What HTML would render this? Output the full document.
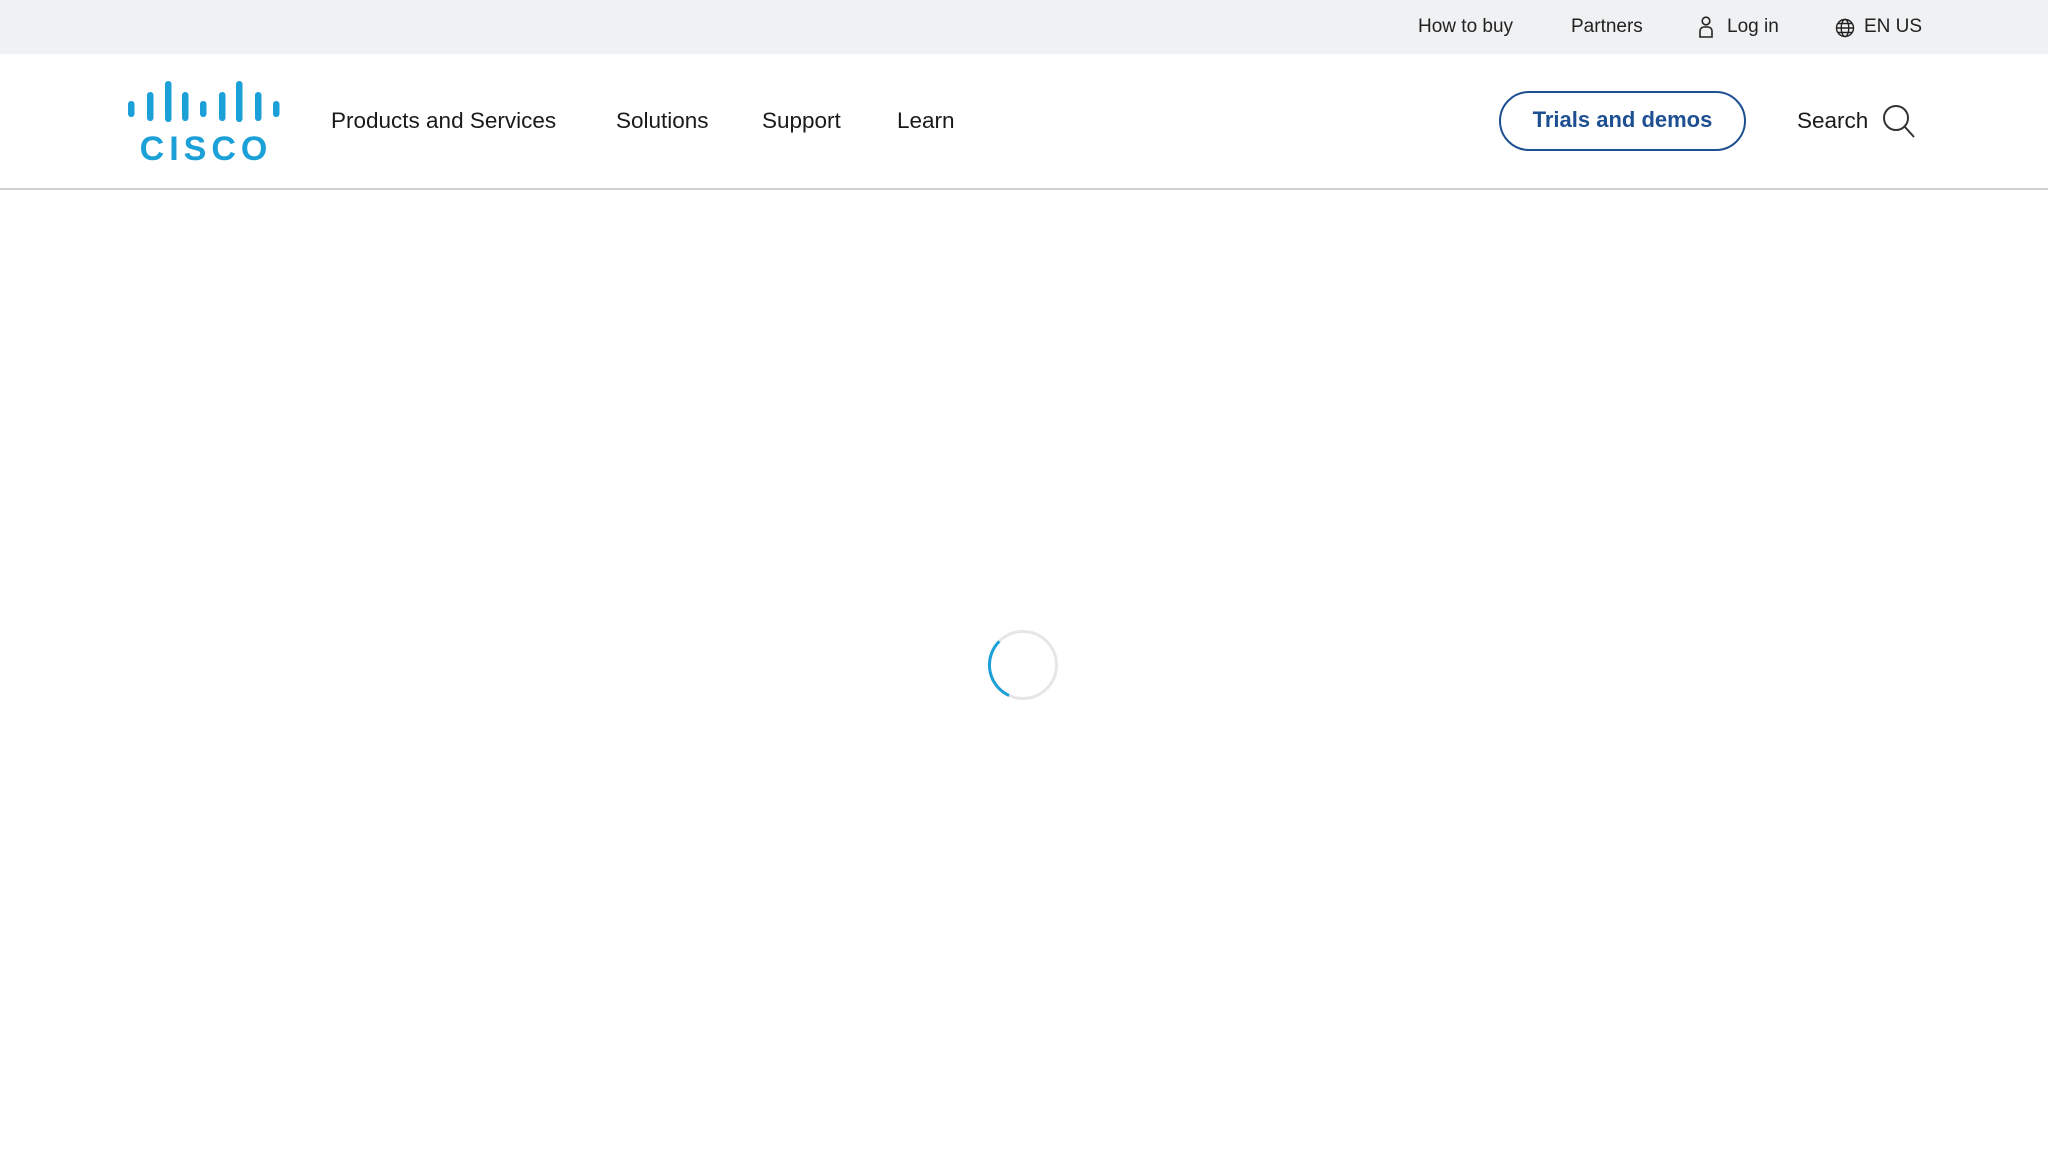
<!DOCTYPE html>
<html><head><meta charset="utf-8"><style>
*{margin:0;padding:0;box-sizing:border-box}
body{width:2048px;height:1152px;background:#fff;font-family:"Liberation Sans",sans-serif;color:#1a1a1a;position:relative;overflow:hidden}
.top{position:absolute;left:0;top:0;width:2048px;height:54px;background:#f0f1f2}
.t{position:absolute;top:15px;font-size:19px;line-height:24px;color:#222}
.hdr{position:absolute;left:0;top:54px;width:2048px;height:136px;border-bottom:2px solid #cfd0d2}
.nav{position:absolute;top:107px;font-size:22.5px;line-height:28px;color:#1a1a1a}
.btn{position:absolute;left:1499px;top:91px;width:247px;height:60px;border:2px solid #1d4f91;border-radius:30px;color:#1d4f91;font-weight:bold;font-size:22px;text-align:center;line-height:54px}
</style></head><body>
<div class="top"></div>
<div class="t" style="left:1418px">How to buy</div>
<div class="t" style="left:1571px">Partners</div>
<svg style="position:absolute;left:1698px;top:16px" width="16" height="22" viewBox="0 0 16 22" fill="none" stroke="#222" stroke-width="1.6"><circle cx="8" cy="5" r="3.8"/><path d="M2 21V15a4 4 0 0 1 4-4h4a4 4 0 0 1 4 4v6z"/></svg>
<div class="t" style="left:1727px">Log in</div>
<svg style="position:absolute;left:1835px;top:18px" width="20" height="20" viewBox="0 0 20 20" fill="none" stroke="#222" stroke-width="1.4"><circle cx="10" cy="10" r="8.5"/><ellipse cx="10" cy="10" rx="3.8" ry="8.5"/><path d="M1.5 10h17M3 5.5h14M3 14.5h14"/></svg>
<div class="t" style="left:1864px">EN US</div>
<div class="hdr"></div>
<svg style="position:absolute;left:0;top:0" width="300" height="170" viewBox="0 0 300 170">
<g fill="#1ba0d7">
<rect x="128" y="101" width="6.5" height="16" rx="3.2"/>
<rect x="147" y="92" width="6.5" height="29" rx="3.2"/>
<rect x="165" y="81" width="6.5" height="41" rx="3.2"/>
<rect x="182" y="92" width="6.5" height="29" rx="3.2"/>
<rect x="200" y="101" width="6.5" height="16" rx="3.2"/>
<rect x="219" y="92" width="6.5" height="29" rx="3.2"/>
<rect x="236" y="81" width="6.5" height="41" rx="3.2"/>
<rect x="255" y="92" width="6.5" height="29" rx="3.2"/>
<rect x="273" y="101" width="6.5" height="16" rx="3.2"/>
</g>
<text x="206" y="160" text-anchor="middle" font-family="Liberation Sans" font-weight="bold" font-size="34" letter-spacing="5" fill="#1ba0d7">CISCO</text>
</svg>
<div class="nav" style="left:331px">Products and Services</div>
<div class="nav" style="left:616px">Solutions</div>
<div class="nav" style="left:762px">Support</div>
<div class="nav" style="left:897px">Learn</div>
<div class="btn">Trials and demos</div>
<div class="nav" style="left:1797px">Search</div>
<svg style="position:absolute;left:1882px;top:104px" width="34" height="34" viewBox="0 0 34 34" fill="none" stroke="#333" stroke-width="2"><circle cx="14" cy="14" r="12"/><path d="M22.5 22.5L32 33"/></svg>
<svg style="position:absolute;left:987px;top:629px" width="72" height="72" viewBox="0 0 72 72" fill="none" stroke-width="3"><circle cx="36" cy="36" r="33.5" stroke="#e6e6e6"/><path d="M12.3 12.3A33.5 33.5 0 0 0 22 66.5" stroke="#1ba0d7"/></svg>
</body></html>
